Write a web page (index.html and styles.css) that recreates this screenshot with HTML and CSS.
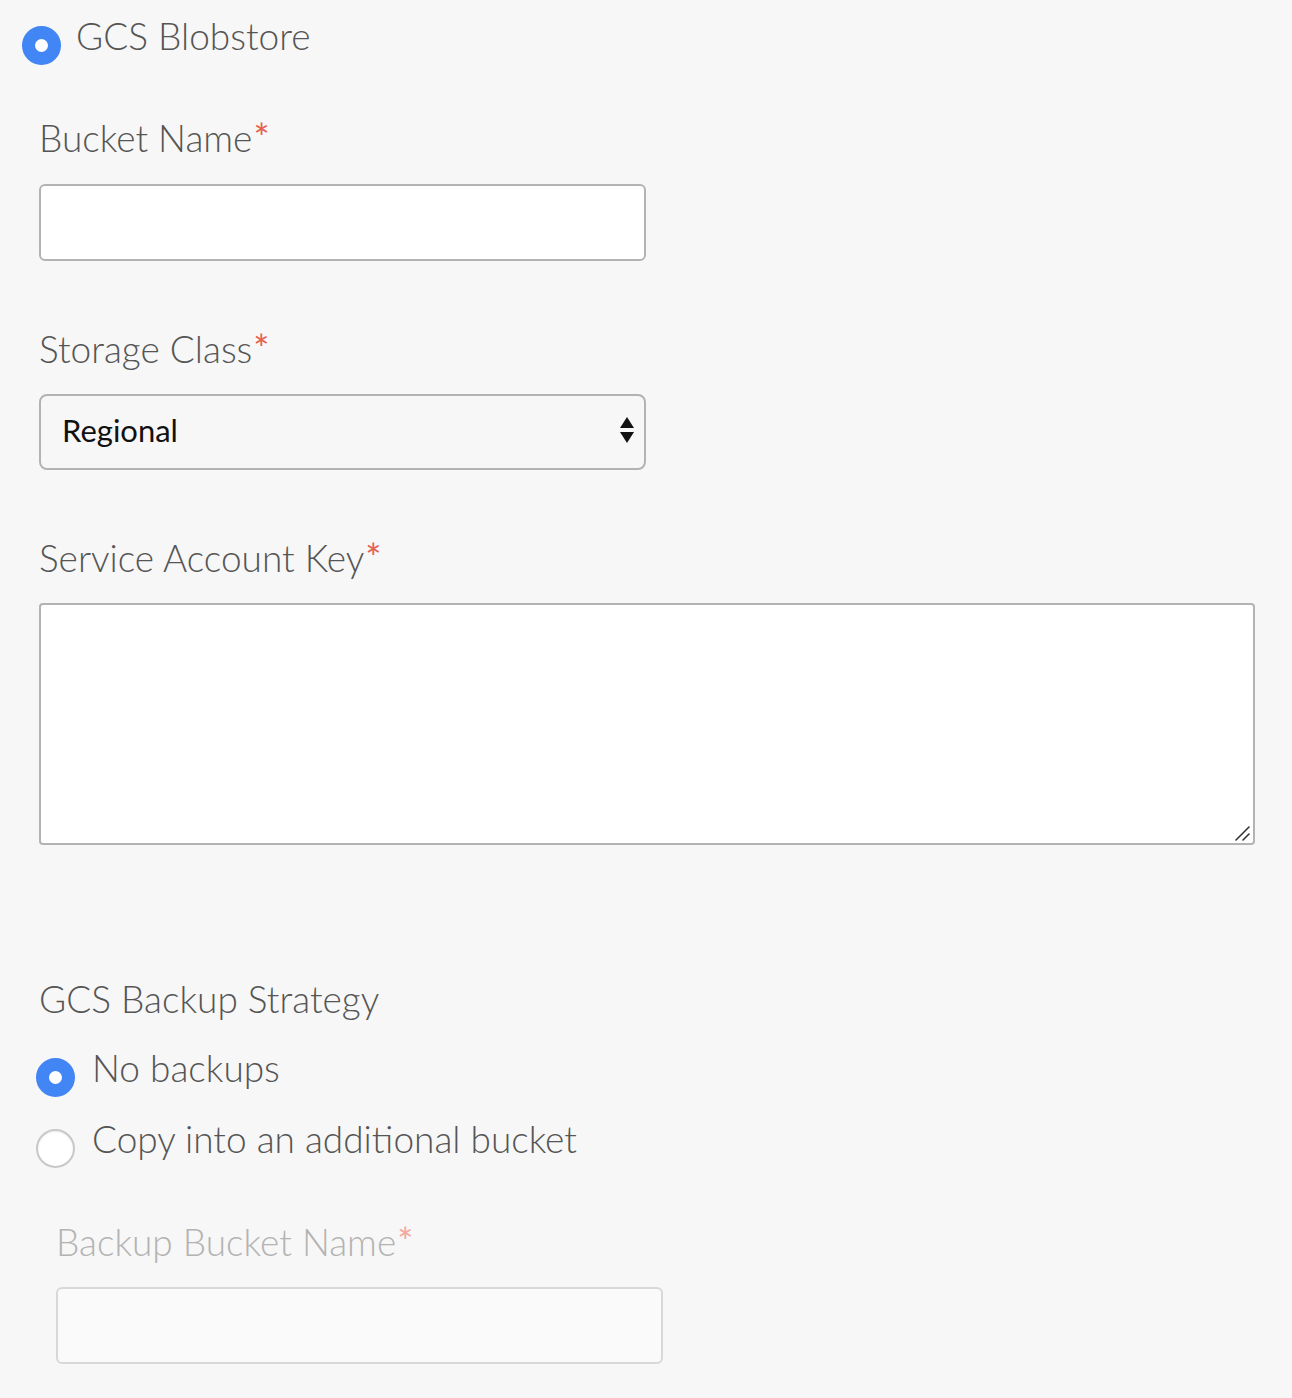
FILE: index.html
```html
<!DOCTYPE html>
<html>
<head>
<meta charset="utf-8">
<link rel="stylesheet" href="styles.css">
</head>
<body>
<div class="page">
  <label class="top-choice">
    <input type="radio" class="radio" name="type" checked>
    <span class="choice-text">GCS Blobstore</span>
  </label>

  <div class="fields">
    <div class="label first">Bucket Name<span class="req">*</span></div>
    <input type="text" class="text-input">

    <div class="label">Storage Class<span class="req">*</span></div>
    <div class="select-wrap">
      <select class="select">
        <option>Regional</option>
      </select>
      <svg class="select-arrows" width="14" height="28" viewBox="0 0 14 28">
        <polygon points="7,0 14,11 0,11" fill="#111"/>
        <polygon points="0,15 14,15 7,26" fill="#111"/>
      </svg>
    </div>

    <div class="label">Service Account Key<span class="req">*</span></div>
    <div class="textarea-wrap">
      <textarea class="textarea"></textarea>
      <svg class="grip" width="18" height="18" viewBox="0 0 18 18">
        <line x1="3" y1="16" x2="16" y2="3" stroke="#333" stroke-width="1.6" stroke-linecap="round"/>
        <line x1="10" y1="16" x2="16" y2="10" stroke="#333" stroke-width="1.6" stroke-linecap="round"/>
      </svg>
    </div>

    <div class="label section">GCS Backup Strategy</div>
    <label class="choice choice-first">
      <input type="radio" class="radio" name="backup" checked>
      <span class="choice-text">No backups</span>
    </label>
    <label class="choice">
      <input type="radio" class="radio" name="backup">
      <span class="choice-text">Copy into an additional bucket</span>
    </label>

    <div class="sub">
      <div class="label disabled">Backup Bucket Name<span class="req">*</span></div>
      <input type="text" class="text-input" disabled>
    </div>
  </div>
</div>
</body>
</html>
```

FILE: styles.css
```css
html, body {
  margin: 0;
  padding: 0;
  background: #f7f7f7;
}

.page {
  font-family: "Lato", "Source Sans Pro", sans-serif;
  font-weight: 300;
  color: #555;
  padding-top: 14px;
  padding-bottom: 40px;
}

.top-choice {
  display: flex;
  align-items: flex-start;
  margin-left: 22px;
  gap: 15px;
}

.choice-text {
  font-size: 37px;
  line-height: 44px;
  color: #555;
}

.radio {
  appearance: none;
  -webkit-appearance: none;
  margin: 12px 0 0 0;
  width: 39px;
  height: 39px;
  border-radius: 50%;
  border: 2px solid #c8c8c8;
  background: #fff;
  box-sizing: border-box;
  flex: none;
  box-shadow: inset 0 1px 2px rgba(0,0,0,0.08);
}

.radio:checked {
  border: 13px solid #4285f4;
  background: #fff;
  box-shadow: none;
}

.fields {
  padding-left: 39px;
}

.label {
  font-size: 37px;
  line-height: 44px;
  color: #555;
  margin-top: 66px;
  margin-bottom: 23px;
}

.label.first {
  margin-top: 51px;
  margin-bottom: 24px;
}

.label.section {
  margin-top: 132px;
  margin-bottom: 25px;
}

.req {
  color: #e5604f;
  font-weight: 400;
  font-size: 38px;
  line-height: 1;
  vertical-align: top;
  position: relative;
  top: 2px;
  margin-left: 1px;
}

.text-input {
  display: block;
  width: 607px;
  height: 77px;
  box-sizing: border-box;
  border: 2px solid #b3b3b3;
  border-radius: 6px;
  background: #fff;
  margin: 0;
  font-size: 32px;
  padding: 0 20px;
  outline: none;
}

.select-wrap {
  position: relative;
  width: 607px;
}

.select {
  appearance: none;
  -webkit-appearance: none;
  display: block;
  width: 607px;
  height: 76px;
  box-sizing: border-box;
  border: 2px solid #b3b3b3;
  border-radius: 8px;
  background: #f7f7f7;
  margin: 0;
  padding: 0 0 4px 21px;
  font-family: "Lato", sans-serif;
  font-weight: 400;
  font-size: 31px;
  color: #111;
  outline: none;
}

.select-arrows {
  position: absolute;
  right: 12px;
  top: 23px;
  pointer-events: none;
}

.textarea-wrap {
  position: relative;
  width: 1216px;
}

.textarea {
  display: block;
  width: 1216px;
  height: 242px;
  box-sizing: border-box;
  border: 2px solid #b3b3b3;
  border-radius: 4px;
  background: #fff;
  margin: 0;
  resize: none;
  outline: none;
}

.grip {
  position: absolute;
  right: 4px;
  bottom: 3px;
  pointer-events: none;
}

.choice {
  display: flex;
  align-items: flex-start;
  gap: 17px;
  margin-left: -3px;
  margin-top: 20px;
}

.choice.choice-first {
  margin-top: 0;
}

.sub {
  padding-left: 17px;
}

.label.disabled {
  color: #b3b3b3;
  margin-top: 52px;
}

.label.disabled .req {
  color: #f2a79f;
}

.text-input:disabled {
  background: #fafafa;
  border-color: #d8d8d8;
}
```
